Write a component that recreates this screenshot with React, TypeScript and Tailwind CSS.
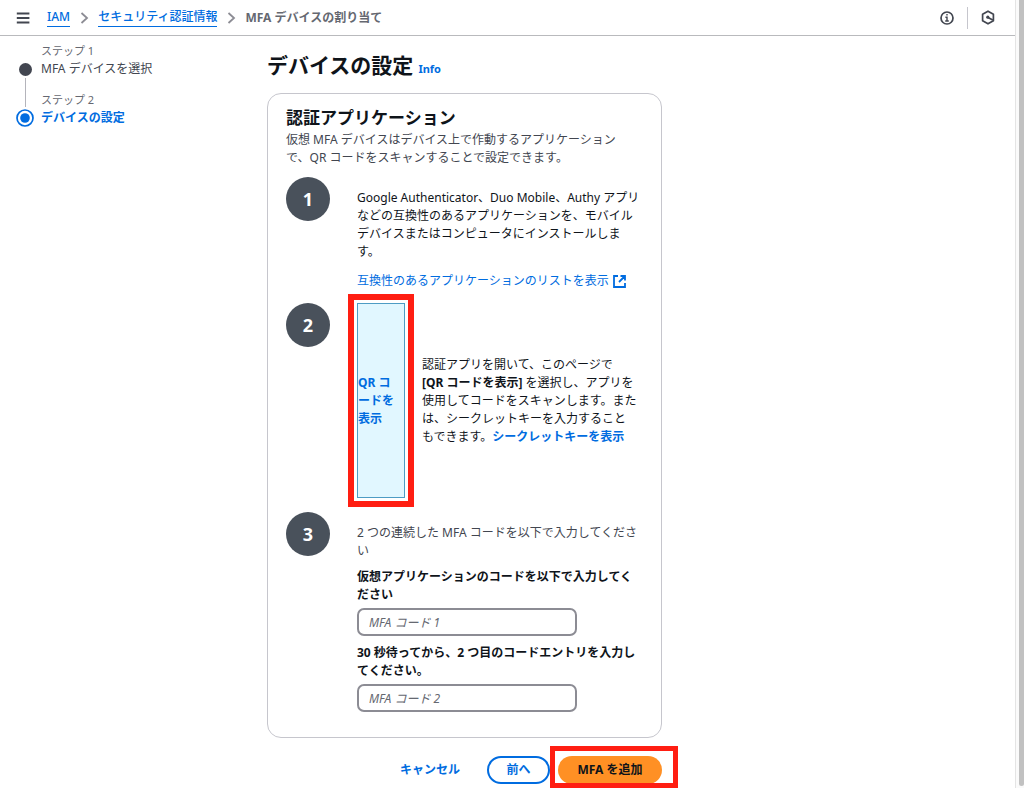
import type { ReactNode } from "react";

function ChevronIcon() {
  return (
    <svg width="9" height="12" viewBox="0 0 9 12" fill="none" stroke="#8c8c94" strokeWidth="1.8" aria-hidden="true">
      <path d="M1.5 1 7 6l-5.5 5" />
    </svg>
  );
}

function Header() {
  return (
    <header className="flex h-9 items-center border-b border-[#b9babd] pl-4 pr-5">
      <button type="button" aria-label="メニュー" className="mr-4 flex h-6 w-[15px] items-center">
        <svg width="14" height="12" viewBox="0 0 14 12" stroke="#424650" strokeWidth="1.8" aria-hidden="true">
          <path d="M0.8 1.5h12.6M0.8 6h12.6M0.8 10.5h12.6" />
        </svg>
      </button>
      <nav aria-label="パンくずリスト" className="flex items-center font-medium">
        <a href="#iam" className="border-b border-[#006ce0] text-[#006ce0]">IAM</a>
        <span className="flex w-7 justify-center"><ChevronIcon /></span>
        <a href="#security" className="border-b border-[#006ce0] text-[#006ce0]">セキュリティ認証情報</a>
        <span className="flex w-7 justify-center"><ChevronIcon /></span>
        <span className="font-bold text-[#656871]">MFA デバイスの割り当て</span>
      </nav>
      <div className="ml-auto flex items-center">
        <button type="button" aria-label="情報">
          <svg width="14" height="14" viewBox="0 0 14 14" fill="none" stroke="#424650" strokeWidth="1.7" aria-hidden="true">
            <circle cx="7" cy="7" r="6" />
            <path d="M7 3v1.6M5.4 6.3H7V10M5.2 10h3.6" strokeWidth="1.4" />
          </svg>
        </button>
        <span className="ml-[13px] mr-[13px] h-[22px] w-px bg-[#c6c6cd]" />
        <button type="button" aria-label="設定">
          <svg width="14" height="15" viewBox="0 0 14 15" fill="none" stroke="#424650" strokeWidth="1.7" aria-hidden="true">
            <path d="M7 1.2 12.4 4.3v6.4L7 13.8 1.6 10.7V4.3z" strokeLinejoin="round" />
            <circle cx="6.8" cy="7.2" r="1.6" fill="#424650" stroke="none" />
            <path d="M7 7.4 11.8 10" />
          </svg>
        </button>
      </div>
    </header>
  );
}

function Steps() {
  return (
    <nav aria-label="ステップ" className="w-[267px] shrink-0 pl-4 pt-[6px]">
      <ol>
        <li className="grid grid-cols-[18px_1fr] gap-x-[7px]">
          <span className="row-span-2 flex flex-col items-center pt-[21px]">
            <span className="size-[13px] shrink-0 rounded-full bg-[#424650]" />
            <span className="mt-[2px] w-px grow bg-[#b4b4bb]" />
          </span>
          <span className="text-[11px] text-[#656871]">ステップ 1</span>
          <a href="#step-1" className="pb-[13px] text-[#424650]">MFA デバイスを選択</a>
        </li>
        <li className="grid grid-cols-[18px_1fr] gap-x-[7px]" aria-current="step">
          <span className="row-span-2 flex flex-col items-center">
            <span className="h-4 w-px bg-[#b4b4bb]" />
            <svg width="18" height="18" viewBox="0 0 18 18" className="mt-[2px]" aria-hidden="true">
              <circle cx="9" cy="9" r="8" fill="none" stroke="#006ce0" strokeWidth="1.7" />
              <circle cx="9" cy="9" r="4.8" fill="#006ce0" />
            </svg>
          </span>
          <span className="text-[11px] text-[#656871]">ステップ 2</span>
          <span className="font-bold text-[#006ce0]">デバイスの設定</span>
        </li>
      </ol>
    </nav>
  );
}

function Instruction({ number, children }: { number: number; children: ReactNode }) {
  return (
    <li className="flex gap-[27px]">
      <span className="flex size-11 shrink-0 items-center justify-center rounded-full bg-[#49515b] text-lg font-bold text-white">
        {number}
      </span>
      <div className="min-w-0 grow">{children}</div>
    </li>
  );
}

function CodeField({ id, label, placeholder }: { id: string; label: string; placeholder: string }) {
  return (
    <div className="mt-2">
      <label htmlFor={id} className="mb-1 block font-bold">{label}</label>
      <input
        id={id}
        type="text"
        placeholder={placeholder}
        className="block h-7 w-[220px] rounded-[7px] border-2 border-[#8c8c94] px-[10px] placeholder:italic placeholder:text-[#656871]"
      />
    </div>
  );
}

export default function App() {
  return (
    <div className="flex min-h-screen bg-white font-['Noto_Sans','Noto_Sans_CJK_JP',sans-serif] text-[12px] leading-[18px] text-[#0f141a]">
      <div className="min-w-0 grow">
        <Header />
        <div className="flex">
          <Steps />
          <main className="max-w-[395px] grow pt-[14px]">
            <div className="flex items-baseline gap-[5px]">
              <h1 className="text-[21px] leading-[30px] font-bold">デバイスの設定</h1>
              <a href="#info" className="text-[11px] font-bold text-[#006ce0]">Info</a>
            </div>
            <form className="mt-[13px]" onSubmit={(e) => e.preventDefault()}>
              <section className="rounded-[14px] border border-[#c6c6cd] px-[18px] pb-[25px] pt-3">
                <h2 className="text-[17px] leading-6 font-bold">認証アプリケーション</h2>
                <p className="pt-px text-[#424650]">
                  仮想 MFA デバイスはデバイス上で作動するアプリケーション
                  <br />
                  で、QR コードをスキャンすることで設定できます。
                </p>
                <ol className="mt-[10px]">
                  <Instruction number={1}>
                    <p className="pt-3">
                      Google Authenticator、Duo Mobile、Authy アプリなどの互換性のあるアプリケーションを、モバイルデバイスまたはコンピュータにインストールします。
                    </p>
                    <a href="#apps" className="mb-[13px] mt-[11px] flex items-center gap-1 text-[#006ce0]">
                      互換性のあるアプリケーションのリストを表示
                      <svg width="13" height="13" viewBox="0 0 13 13" fill="none" stroke="#006ce0" strokeWidth="1.8" aria-hidden="true">
                        <path d="M5 1H1v11h11V8M7.5 1H12v4.5M12 1 6 7" />
                      </svg>
                    </a>
                  </Instruction>
                  <Instruction number={2}>
                    <div className="mb-[14px] flex items-center gap-[17px]">
                      <div className="relative shrink-0">
                        <button
                          type="button"
                          className="flex h-[195px] w-12 items-center border border-[#4d9cc4] bg-[#e1f7ff] text-left font-bold text-[#006ce0]"
                        >
                          <span>
                            QR コ<br />ードを<br />表示
                          </span>
                        </button>
                        <span className="pointer-events-none absolute -inset-[9px] border-[6px] border-[#ff1e12]" />
                      </div>
                      <p className="whitespace-nowrap">
                        認証アプリを開いて、このページで
                        <br />
                        <b>[QR コードを表示]</b> を選択し、アプリを
                        <br />
                        使用してコードをスキャンします。また
                        <br />
                        は、シークレットキーを入力すること
                        <br />
                        もできます。<a href="#secret" className="font-bold text-[#006ce0]">シークレットキーを表示</a>
                      </p>
                    </div>
                  </Instruction>
                  <Instruction number={3}>
                    <p className="pt-3 text-[#424650]">2 つの連続した MFA コードを以下で入力してください</p>
                    <CodeField id="code-1" label="仮想アプリケーションのコードを以下で入力してください" placeholder="MFA コード 1" />
                    <CodeField id="code-2" label="30 秒待ってから、2 つ目のコードエントリを入力してください。" placeholder="MFA コード 2" />
                  </Instruction>
                </ol>
              </section>
              <div className="mb-1 mt-[18px] flex items-center justify-end gap-2 font-bold">
                <button type="button" className="h-7 px-[19px] text-[#006ce0]">キャンセル</button>
                <button type="button" className="h-7 w-[63px] rounded-full border-2 border-[#006ce0] text-[#006ce0]">前へ</button>
                <div className="relative">
                  <button type="submit" className="block h-7 w-[104px] rounded-full bg-[#ff9024]">MFA を追加</button>
                  <span className="pointer-events-none absolute -bottom-1 -left-2 -right-4 -top-[10px] border-[5px] border-[#ff1e12]" />
                </div>
              </div>
            </form>
          </main>
        </div>
      </div>
      <div className="flex w-[9px] shrink-0 justify-end border-l border-[#e4e4e4] bg-[#fafafa] pb-[2px]" aria-hidden="true">
        <span className="w-[5px] rounded-b bg-[#c1c1c1]" />
      </div>
    </div>
  );
}
